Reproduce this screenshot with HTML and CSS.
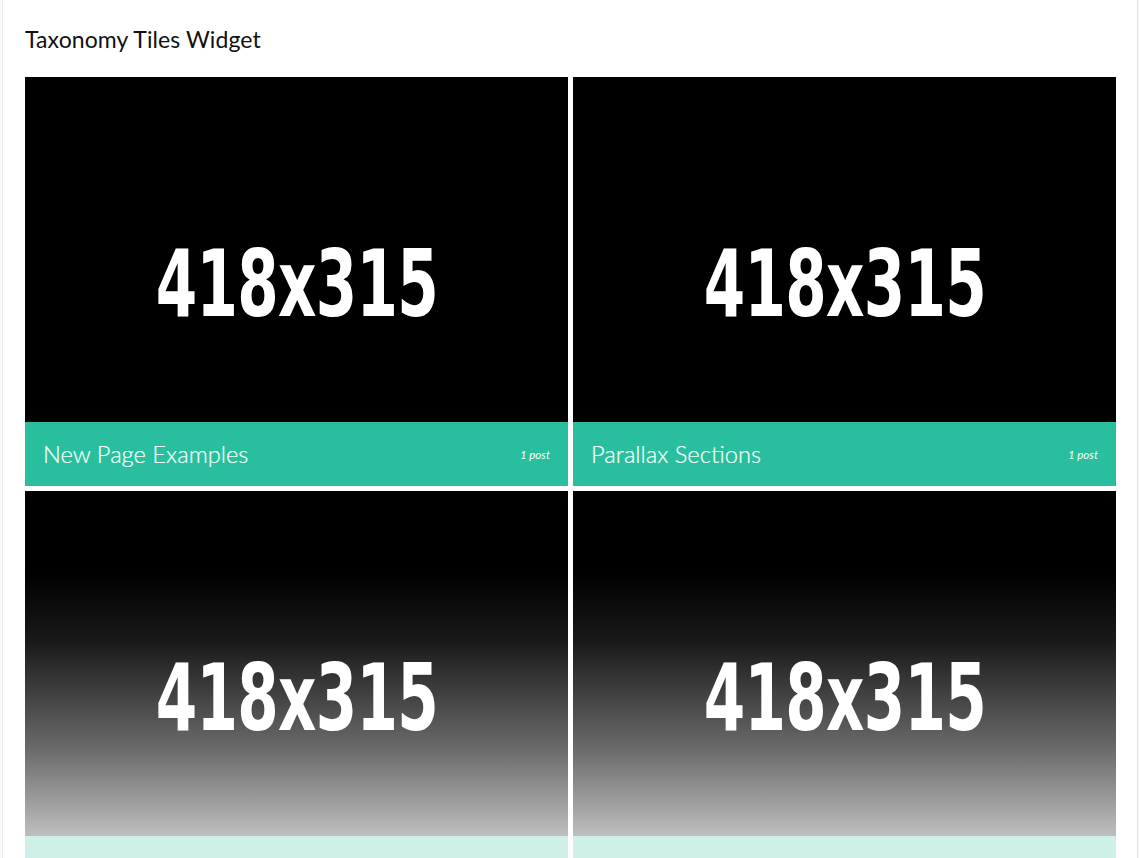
FILE: index.html
```html
<!DOCTYPE html>
<html>
<head>
<meta charset="utf-8">
<link rel="stylesheet" href="styles.css">
</head>
<body>
<div class="page">
  <h2 class="widget-title">Taxonomy Tiles Widget</h2>
  <div class="tiles">
    <a class="tile">
      <div class="thumb"><span class="ph">418x315</span></div>
      <div class="caption"><span class="name">New Page Examples</span><span class="count">1 post</span></div>
    </a>
    <a class="tile">
      <div class="thumb"><span class="ph">418x315</span></div>
      <div class="caption"><span class="name">Parallax Sections</span><span class="count">1 post</span></div>
    </a>
    <a class="tile faded">
      <div class="thumb"><span class="ph">418x315</span></div>
      <div class="caption"></div>
    </a>
    <a class="tile faded">
      <div class="thumb"><span class="ph">418x315</span></div>
      <div class="caption"></div>
    </a>
  </div>
</div>
</body>
</html>
```

FILE: styles.css
```css
html, body {
  margin: 0;
  padding: 0;
  background: #fafafa;
  height: 100%;
  overflow: hidden;
}
.page {
  margin: 0 1px 0 2px;
  background: #fff;
  border-left: 1px solid #ececec;
  border-right: 1px solid #e4e4e4;
  padding: 24px 21px 40px 22px;
  min-height: 100%;
  box-sizing: border-box;
}
.widget-title {
  margin: 0 0 23px 0;
  font-family: Lato, "Open Sans", sans-serif;
  font-weight: 400;
  font-size: 23px;
  line-height: 30px;
  color: #111;
  letter-spacing: 0.1px;
}
.tiles {
  display: grid;
  grid-template-columns: 543px 543px;
  gap: 5px;
}
.tile {
  position: relative;
  display: block;
  height: 409px;
  overflow: hidden;
  background: #000;
}
.thumb {
  height: 409px;
  display: flex;
  align-items: center;
  justify-content: center;
  background: #000;
}
.faded .thumb {
  background: linear-gradient(to bottom, #000 0%, #000 20%, #1a1a1a 37%, #6a6a6a 63%, #bdbdbd 84%, #bdbdbd 100%);
}
.ph {
  font-family: "DejaVu Sans Condensed", "DejaVu Sans", sans-serif;
  font-weight: bold;
  font-size: 92px;
  color: #fff;
  transform: scaleX(0.72);
  letter-spacing: -1px;
  margin-top: 6px;
  white-space: nowrap;
}
.caption {
  position: absolute;
  left: 0;
  right: 0;
  bottom: 0;
  height: 64px;
  background: #29bf9e;
  display: flex;
  align-items: center;
  justify-content: space-between;
  padding: 0 18px 0 18px;
}
.faded .caption {
  background: #cff0e8;
}
.name {
  font-family: Lato, sans-serif;
  font-weight: 300;
  font-size: 23.7px;
  color: #f4fffb;
  -webkit-text-stroke: 0.2px #f4fffb;
}
.count {
  font-family: Lato, sans-serif;
  font-style: italic;
  font-weight: 400;
  font-size: 11.5px;
  color: #f4fffb;
}
```
